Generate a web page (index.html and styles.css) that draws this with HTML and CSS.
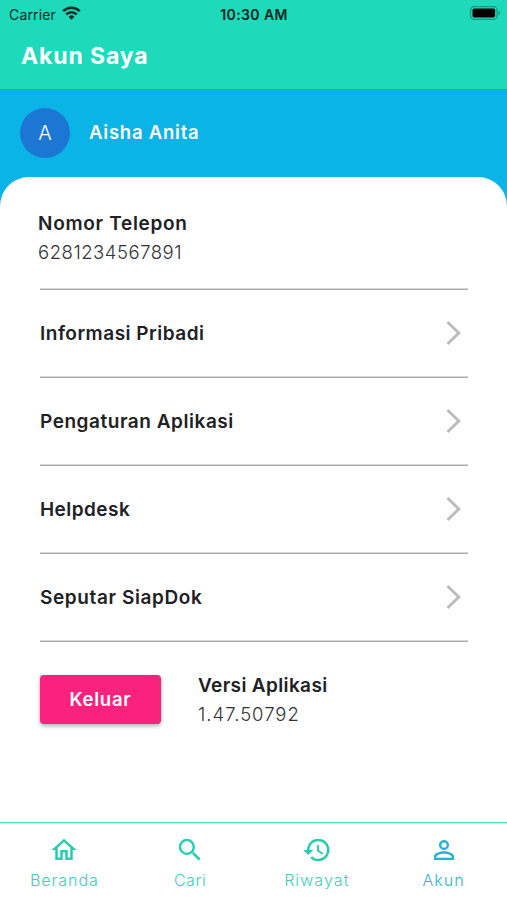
FILE: index.html
```html
<!DOCTYPE html>
<html lang="id">
<head>
<meta charset="utf-8">
<meta name="viewport" content="width=device-width, initial-scale=1">
<title>Akun Saya</title>
<link rel="stylesheet" href="styles.css">
</head>
<body>
<div class="app">
  <header class="header">
    <div class="status">
      <div class="carrier"><span>Carrier</span>
        <svg class="wifi" width="19" height="14" viewBox="0 0 19 14"><g fill="none" stroke="#042b25" stroke-width="2.6"><path d="M1.200 5.200a11.800 11.800 0 0 1 16.600 0"/><path d="M4.300 8.400a7.400 7.400 0 0 1 10.400 0"/></g><path fill="#042b25" d="M6.600 10.700a4.200 4.200 0 0 1 5.800 0L9.500 13.700z"/></svg>
      </div>
      <span class="time">10:30 AM</span>
      <svg class="battery" width="32" height="14" viewBox="0 0 32 14"><rect x="1.500" y="0.700" width="26.600" height="12.600" rx="3.600" fill="none" stroke="#159b84" stroke-width="1.300"/><rect x="3.500" y="2.400" width="22.600" height="9.200" rx="1.800" fill="#000"/><path d="M29.500 4.800c2 .7 2 3.700 0 4.400z" fill="#159b84"/></svg>
    </div>
    <h1 class="title">Akun Saya</h1>
  </header>
  <section class="profile">
    <div class="avatar">A</div>
    <div class="name">Aisha Anita</div>
  </section>
  <main class="sheet">
    <div class="phone">
      <div class="label label-phone">Nomor Telepon</div>
      <div class="value value-phone">6281234567891</div>
    </div>
    <div class="row"><span class="label label-info">Informasi Pribadi</span><svg class="chevron" width="16" height="26" viewBox="0 0 16 26"><path d="M1.500 2l11.300 11L1.500 24"/></svg></div>
    <div class="row"><span class="label label-settings">Pengaturan Aplikasi</span><svg class="chevron" width="16" height="26" viewBox="0 0 16 26"><path d="M1.500 2l11.300 11L1.500 24"/></svg></div>
    <div class="row"><span class="label label-help">Helpdesk</span><svg class="chevron" width="16" height="26" viewBox="0 0 16 26"><path d="M1.500 2l11.300 11L1.500 24"/></svg></div>
    <div class="row"><span class="label label-about">Seputar SiapDok</span><svg class="chevron" width="16" height="26" viewBox="0 0 16 26"><path d="M1.500 2l11.300 11L1.500 24"/></svg></div>
    <div class="bottom">
      <button class="logout" type="button">Keluar</button>
      <div class="version">
        <div class="label label-version">Versi Aplikasi</div>
        <div class="value value-version">1.47.50792</div>
      </div>
    </div>
  </main>
  <nav class="nav">
    <a class="tab tab-home"><svg width="30" height="30" viewBox="0 0 24 24"><path d="M12 5.690l5 4.500V18h-2v-6H9v6H7v-7.810l5-4.500M12 3L2 12h3v8h6v-6h2v6h6v-8h3L12 3z"/></svg><span>Beranda</span></a>
    <a class="tab tab-search"><svg width="30" height="30" viewBox="0 0 24 24"><path d="M15.500 14h-.79l-.28-.27A6.471 6.471 0 0 0 16 9.500 6.500 6.500 0 1 0 9.500 16c1.610 0 3.090-.59 4.230-1.570l.27.28v.79l5 4.990L20.490 19l-4.990-5zm-6 0C7.010 14 5 11.990 5 9.500S7.010 5 9.500 5 14 7.010 14 9.500 11.990 14 9.500 14z"/></svg><span>Cari</span></a>
    <a class="tab tab-history"><svg width="30" height="30" viewBox="0 0 24 24"><path d="M13 3a9 9 0 0 0-9 9H1l3.890 3.890.07.14L9 12H6c0-3.870 3.130-7 7-7s7 3.130 7 7-3.130 7-7 7c-1.930 0-3.680-.79-4.940-2.060l-1.420 1.420A8.954 8.954 0 0 0 13 21a9 9 0 0 0 0-18zm-1 5v5l4.280 2.540.72-1.210-3.500-2.080V8H12z"/></svg><span>Riwayat</span></a>
    <a class="tab tab-account"><svg width="30" height="30" viewBox="0 0 24 24"><path d="M12 5.900a2.100 2.100 0 1 1 0 4.200 2.100 2.100 0 0 1 0-4.200m0 9c2.970 0 6.100 1.460 6.100 2.100v1.100H5.900V17c0-.64 3.130-2.100 6.100-2.100M12 4C9.790 4 8 5.790 8 8s1.790 4 4 4 4-1.790 4-4-1.790-4-4-4zm0 9c-2.670 0-8 1.340-8 4v3h16v-3c0-2.660-5.330-4-8-4z"/></svg><span>Akun</span></a>
  </nav>
</div>
</body>
</html>
```
FILE: styles.css
```css
* { box-sizing: border-box; }
body { margin: 0; font-family: Inter, "Liberation Sans", sans-serif; background: #fff; color: #202124; }
.app { height: 900px; display: flex; flex-direction: column; background: #0bb4e7; white-space: nowrap; }
.header { height: 89px; background: #1edabb; }
.status { height: 28px; padding: 0 6px 0 9px; display: grid; grid-template-columns: 1fr auto 1fr; align-items: center; color: #042b25; font-size: 14px; }
.carrier { display: flex; align-items: center; gap: 6px; letter-spacing: .15px; }
.wifi { margin-top: -3px; }
.time { font-weight: 600; color: #03241e; letter-spacing: .4px; margin-right: 2px; }
.battery { justify-self: end; margin-top: -2px; }
.title { margin: 13px 0 0 21px; font-size: 23px; line-height: 30px; font-weight: 700; color: #fff; letter-spacing: .88px; }
.profile { height: 88px; padding-left: 20px; display: flex; align-items: center; color: #fff; }
.avatar { width: 50px; height: 50px; border-radius: 50%; background: #1b77d3; display: flex; align-items: center; justify-content: center; font-size: 20px; font-weight: 300; }
.name { margin: -2px 0 0 19px; font-size: 18.5px; font-weight: 600; letter-spacing: .77px; }
.sheet { height: 645px; background: #fff; border-radius: 29px 29px 0 0; padding: 0 39px 0 40px; }
.label { padding-top: 2px; font-size: 19px; line-height: 28px; font-weight: 600; }
.value { font-size: 18.5px; line-height: 29px; font-weight: 300; color: #333; }
.label-phone { letter-spacing: .7px; }
.value-phone { letter-spacing: .53px; }
.label-info { letter-spacing: .5px; }
.label-settings { letter-spacing: .54px; }
.label-help { letter-spacing: .45px; }
.label-about { letter-spacing: .6px; }
.label-version { letter-spacing: .36px; }
.value-version { letter-spacing: 1px; }
.phone { height: 113px; padding-top: 31px; border-bottom: 1px solid #aaa; box-shadow: 0 -1px #d8d8d8 inset; }
.phone .label, .phone .value { margin-left: -2px; }
.row { height: 88px; padding-bottom: 1px; border-bottom: 1px solid #aaa; box-shadow: 0 -1px #d8d8d8 inset; display: flex; align-items: center; justify-content: space-between; }
.chevron { fill: none; stroke: #bbb; stroke-width: 2.9; margin-right: 6px; }
.bottom { display: flex; align-items: flex-start; padding-top: 28px; }
.logout { margin: 5px 0 0; width: 121px; height: 49px; padding: 0 0 2px; border: 0; border-radius: 4px; background: #fb227d; color: #fff; font: 600 18.5px Inter, sans-serif; letter-spacing: .75px; box-shadow: 0 2px 4px rgba(0,0,0,.32); }
.version { margin-left: 37px; }
.nav { height: 78px; background: #fff; border-top: 1px solid #5ed7c5; box-shadow: 0 1px #c9f1ea inset; display: grid; grid-template-columns: repeat(4, 1fr); }
.tab { display: flex; flex-direction: column; align-items: center; padding-top: 12px; color: #35d2b7; font-size: 16px; font-weight: 300; }
.tab svg { fill: #24cfb1; flex: none; }
.tab span { line-height: 24px; margin-top: 3px; letter-spacing: .6px; }
.tab-home { padding-left: 2px; }
.tab-home span { letter-spacing: .95px; }
.tab-history span { letter-spacing: 1.1px; }
.tab-account { color: #24b8d4; }
.tab-account span { letter-spacing: 1.1px; }
.tab-account svg { fill: #20b5d3; }
```
